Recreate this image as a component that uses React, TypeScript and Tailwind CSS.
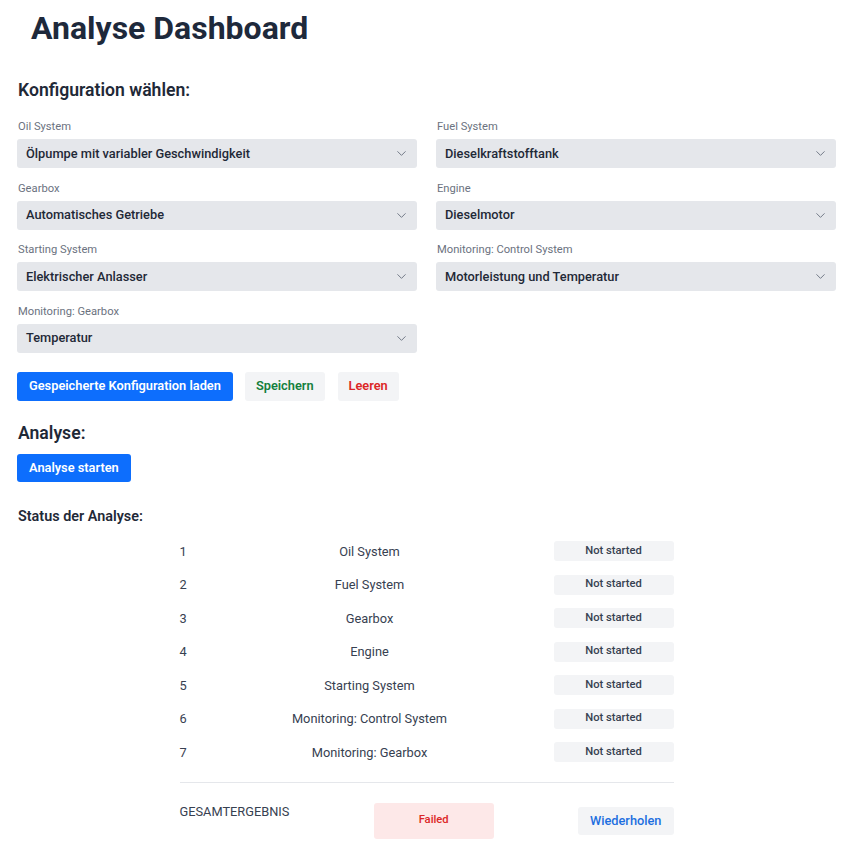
import React from "react";
import { ChevronDown } from "lucide-react";

const fields: [string, string][] = [
  ["Oil System", "Ölpumpe mit variabler Geschwindigkeit"],
  ["Fuel System", "Dieselkraftstofftank"],
  ["Gearbox", "Automatisches Getriebe"],
  ["Engine", "Dieselmotor"],
  ["Starting System", "Elektrischer Anlasser"],
  ["Monitoring: Control System", "Motorleistung und Temperatur"],
  ["Monitoring: Gearbox", "Temperatur"],
];

const steps = [
  "Oil System",
  "Fuel System",
  "Gearbox",
  "Engine",
  "Starting System",
  "Monitoring: Control System",
  "Monitoring: Gearbox",
];

function Field({ label, value }: { label: string; value: string }) {
  return (
    <div className="flex flex-col">
      <div className="text-[11.2px] leading-[14px] text-[#6b7280] mb-[5px] pl-[1px]">{label}</div>
      <div className="h-[29px] rounded-[3px] bg-[#e5e7eb] flex items-center justify-between pl-[9px] pr-[8px]">
        <span className="text-[12.8px] font-medium text-[#1f2937]">{value}</span>
        <ChevronDown size={15} strokeWidth={1.5} className="text-[#6b7280]" />
      </div>
    </div>
  );
}

export default function App() {
  return (
    <div className="w-[848px] min-h-[868px] bg-white font-['Roboto',sans-serif] text-[#1f2937] pl-[17px] pr-[12px]">
      <h1 className="pl-[14px] pt-[8px] text-[32px] font-bold leading-[40px] text-[#1e293b]">
        Analyse Dashboard
      </h1>
      <h2 className="mt-[30px] pl-[1px] text-[17.6px] leading-[24px] font-semibold">Konfiguration wählen:</h2>
      <div className="mt-[18px] grid grid-cols-[400px_400px] gap-x-[19px] gap-y-[13.5px]">
        {fields.map(([l, v]) => (
          <Field key={l} label={l} value={v} />
        ))}
      </div>
      <div className="mt-[19px] flex items-center">
        <button className="h-[29px] px-[12px] rounded-[3px] bg-[#0d6efd] text-white text-[12.8px] font-semibold">
          Gespeicherte Konfiguration laden
        </button>
        <button className="ml-[12px] h-[29px] px-[11px] rounded-[3px] bg-[#f3f4f6] text-[#15803d] text-[12.8px] font-semibold">
          Speichern
        </button>
        <button className="ml-[13px] h-[29px] px-[11px] rounded-[3px] bg-[#f3f4f6] text-[#dc2626] text-[12.8px] font-semibold">
          Leeren
        </button>
      </div>
      <h2 className="mt-[20px] pl-[1px] text-[17.6px] leading-[24px] font-semibold">Analyse:</h2>
      <button className="mt-[9px] h-[28px] px-[12px] rounded-[3px] bg-[#0d6efd] text-white text-[12.8px] font-semibold">
        Analyse starten
      </button>
      <h3 className="mt-[25px] pl-[1px] text-[14.4px] leading-[20px] font-semibold">Status der Analyse:</h3>
      <div className="mx-auto w-[494px] mt-[8px]">
        {steps.map((s, i) => (
          <div key={s} className="h-[33.5px] grid grid-cols-[60px_260px_1fr] items-center text-[12.8px] text-[#374151]">
            <span>{i + 1}</span>
            <span className="text-center">{s}</span>
            <span className="justify-self-end w-[120px] h-[20px] rounded-[3px] bg-[#f3f4f6] flex items-center justify-center text-[11.2px] font-medium text-[#374151]">
              Not started
            </span>
          </div>
        ))}
        <div className="mt-[13px] border-t border-[#e5e7eb]" />
        <div className="mt-[19px] flex items-center justify-between">
          <span className="text-[12.8px] text-[#374151] mb-[18px]">GESAMTERGEBNIS</span>
          <span className="w-[120px] h-[36px] rounded-[3px] bg-[#fde8e8] flex items-center justify-center text-[11.2px] font-medium text-[#dc2626]">
            Failed
          </span>
          <button className="h-[28px] px-[12px] rounded-[3px] bg-[#f3f4f6] text-[#1d6fe0] text-[12.8px] font-medium">
            Wiederholen
          </button>
        </div>
      </div>
    </div>
  );
}
